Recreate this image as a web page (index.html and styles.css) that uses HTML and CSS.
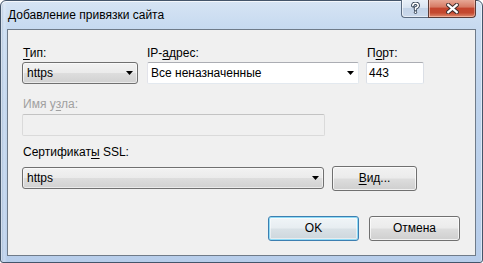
FILE: index.html
```html
<!DOCTYPE html>
<html lang="ru">
<head>
<meta charset="utf-8">
<title>Добавление привязки сайта</title>
<link rel="stylesheet" href="styles.css">
</head>
<body>
<div class="window">
  <div class="titlebar">
    <div class="title">Добавление привязки сайта</div>
    <div class="caption">
      <div class="cbtn help">
        <svg width="9" height="12" viewBox="0 0 9 12">
          <path d="M1.8 3.7 Q1.8 1.3 4.5 1.3 Q7.2 1.3 7.2 3.6 Q7.2 5.2 4.5 6.1 L4.5 7.6" fill="none" stroke="#2b3a4d" stroke-width="3.4" stroke-linecap="round"/>
          <circle cx="4.5" cy="10.2" r="1.6" fill="#2b3a4d"/>
          <path d="M1.8 3.7 Q1.8 1.3 4.5 1.3 Q7.2 1.3 7.2 3.6 Q7.2 5.2 4.5 6.1 L4.5 7.6" fill="none" stroke="#fff" stroke-width="1.6" stroke-linecap="round"/>
          <rect x="3.7" y="9.4" width="1.6" height="1.6" fill="#fff"/>
        </svg>
      </div>
      <div class="cbtn close">
        <svg width="13" height="11" viewBox="0 0 13 11">
          <path d="M2.2 1.8 L10.8 9.2 M10.8 1.8 L2.2 9.2" fill="none" stroke="#3b2a2a" stroke-width="4.2" stroke-linecap="round"/>
          <path d="M2.2 1.8 L10.8 9.2 M10.8 1.8 L2.2 9.2" fill="none" stroke="#fff" stroke-width="2.2" stroke-linecap="square"/>
        </svg>
      </div>
    </div>
  </div>
  <div class="client">
    <div class="row row-top">
      <div class="field f-type">
        <div class="label"><u>Т</u>ип:</div>
        <div class="combo"><span class="val">https</span><svg class="arrow" width="7" height="4" viewBox="0 0 7 4"><path d="M0 0 H7 L3.5 4 Z" fill="#000"/></svg></div>
      </div>
      <div class="field f-ip">
        <div class="label">IP-<u>а</u>дрес:</div>
        <div class="ecombo"><span class="val">Все неназначенные</span><svg class="arrow" width="7" height="4" viewBox="0 0 7 4"><path d="M0 0 H7 L3.5 4 Z" fill="#000"/></svg></div>
      </div>
      <div class="field f-port">
        <div class="label">П<u>о</u>рт:</div>
        <div class="edit"><span class="val">443</span></div>
      </div>
    </div>
    <div class="field f-host">
      <div class="label disabled">Имя у<u>з</u>ла:</div>
      <div class="edit is-disabled"></div>
    </div>
    <div class="field f-ssl">
      <div class="label ssl-label">Сертификат<u>ы</u> SSL:</div>
      <div class="row ssl-row">
        <div class="combo wide"><span class="val">https</span><svg class="arrow" width="7" height="4" viewBox="0 0 7 4"><path d="M0 0 H7 L3.5 4 Z" fill="#000"/></svg></div>
        <div class="btn view"><u>В</u>ид...</div>
      </div>
    </div>
    <div class="row actions">
      <div class="btn default">OK</div>
      <div class="btn">Отмена</div>
    </div>
  </div>
</div>
</body>
</html>
```

FILE: styles.css
```css
* { box-sizing: border-box; }
html, body { margin: 0; padding: 0; }
body {
  width: 483px;
  height: 263px;
  overflow: hidden;
  background: #ffffff;
  font-family: "Liberation Sans", Arial, sans-serif;
  font-size: 12px;
  line-height: 15px;
  color: #000;
}
u { text-decoration: underline; text-underline-offset: 2px; }

.window {
  width: 483px;
  height: 263px;
  border: 1px solid #44556a;
  border-radius: 6px 6px 3px 3px;
  padding: 0 6px 6px 6px;
  display: flex;
  flex-direction: column;
  background:
    linear-gradient(90deg, rgba(120,145,175,0.35) 0, rgba(255,255,255,0.25) 3px, rgba(255,255,255,0) 6px),
    linear-gradient(180deg, #d6e4f4 0%, #c7daf0 10%, #bed3ec 40%, #b7cdea 100%);
  box-shadow: inset 0 1px 0 rgba(255,255,255,0.7), inset 1px 0 0 rgba(255,255,255,0.5), inset -1px 0 0 rgba(255,255,255,0.5);
}

.titlebar {
  height: 28px;
  display: flex;
  align-items: flex-start;
  flex: none;
}
.title {
  padding: 7px 0 0 1px;
  color: #000;
  white-space: nowrap;
}
.caption {
  margin-left: auto;
  margin-top: -1px;
  display: flex;
}
.cbtn {
  height: 18px;
  display: flex;
  align-items: center;
  justify-content: center;
  border: 1px solid #5a6b80;
  border-top: none;
}
.help {
  width: 27px;
  border-right: none;
  border-radius: 0 0 0 4px;
  background: linear-gradient(180deg, #e9f0f8 0%, #d9e4f1 45%, #c3d3e7 50%, #cbd9ec 100%);
  box-shadow: inset 1px 0 0 rgba(255,255,255,0.6), inset 0 -1px 0 rgba(255,255,255,0.5);
}
.close {
  width: 48px;
  border-color: #5b3b36;
  border-radius: 0 0 4px 0;
  background: linear-gradient(180deg, #e7a896 0%, #d77c66 40%, #c4452e 50%, #c4492f 75%, #de8a6e 100%);
  box-shadow: inset 1px 0 0 rgba(255,220,210,0.6), inset -1px 0 0 rgba(255,220,210,0.4), inset 0 -1px 0 rgba(255,200,180,0.6);
}
.help svg { margin-top: -1px; }
.close svg { margin-top: -1px; }

.client {
  flex: 1;
  background: #f0f0f0;
  border: 1px solid #6f7b89;
  padding: 16px 15px 14px 14px;
  display: flex;
  flex-direction: column;
}

.row { display: flex; }
.field { display: flex; flex-direction: column; }
.label { height: 15px; margin-bottom: 1px; white-space: nowrap; padding-left: 1px; }
.f-ip .label { padding-left: 0; }
.label.disabled { color: #a0a0a0; }

.f-type { width: 116px; }
.f-ip { width: 212px; margin-left: 9px; }
.f-port { width: 58px; margin-left: 7px; }

.combo, .ecombo, .edit {
  height: 22px;
  display: flex;
  align-items: center;
  white-space: nowrap;
}
.val { flex: 1; }
.combo {
  border: 1px solid #707070;
  border-radius: 3px;
  padding: 0 4px 0 4px;
  background: linear-gradient(180deg, #f2f2f2 0%, #ebebeb 48%, #dddddd 52%, #d1d1d1 100%);
  box-shadow: inset 0 0 0 1px rgba(255,255,255,0.55);
}
.ecombo {
  border: 1px solid #e3e9ef;
  border-top-color: #abadb3;
  border-left-color: #e2e3ea;
  border-radius: 2px;
  background: #fff;
  padding: 0 4px 0 3px;
}
.edit {
  border: 1px solid #e3e9ef;
  border-top-color: #abadb3;
  border-left-color: #dbdfe6;
  border-right-color: #dbdfe6;
  border-radius: 2px;
  background: #fff;
  padding: 0 2px 0 2px;
}
.arrow { flex: none; }

.f-host { margin-top: 13px; }
.f-host .label { margin-bottom: 2px; }
.f-host .edit { width: 303px; }
.edit.is-disabled {
  background: #f0f0f0;
  border-color: #dadada;
  border-top-color: #c3c3c3;
}

.f-ssl { margin-top: 9px; }
.ssl-label { margin-bottom: 6px; }
.ssl-row { align-items: flex-start; }
.combo.wide { width: 302px; margin-top: 1px; }

.btn {
  display: flex;
  align-items: center;
  justify-content: center;
  height: 25px;
  border: 1px solid #707070;
  border-radius: 3px;
  background: linear-gradient(180deg, #f2f2f2 0%, #ebebeb 48%, #dddddd 52%, #cfcfcf 100%);
  box-shadow: inset 0 0 0 1px rgba(255,255,255,0.7);
  white-space: nowrap;
}
.btn.view { width: 85px; margin-left: 8px; }

.actions {
  margin-top: 25px;
  justify-content: flex-end;
  gap: 10px;
}
.actions .btn { width: 91px; }
.btn.default {
  border-color: #3c7fb1;
  box-shadow: inset 0 0 0 1px #8fdaf5, inset 0 0 0 2px rgba(255,255,255,0.5);
  background: linear-gradient(180deg, #f0f5f8 0%, #e7edf1 48%, #d9e1e6 52%, #cdd6dc 100%);
}
```
